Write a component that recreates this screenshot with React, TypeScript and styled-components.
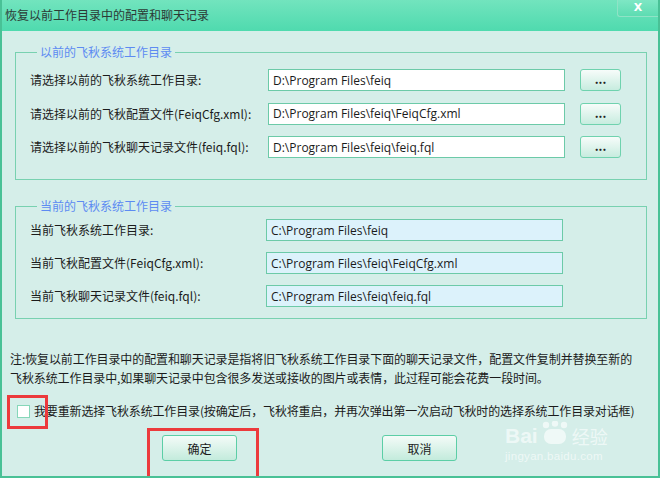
import React, { useState } from "react";
import styled, { createGlobalStyle } from "styled-components";

const GlobalStyle = createGlobalStyle`
	html, body {
		margin: 0;
		padding: 0;
		background: #d5eee9;
	}
	#root {
		width: 660px;
		height: 478px;
	}
	* {
		box-sizing: border-box;
	}
`;

const uiFont = `"Noto Sans CJK SC", "Noto Sans", sans-serif`;
const editFont = `"Open Sans", "Noto Sans CJK SC", sans-serif`;

const previous = [
	{ label: "请选择以前的飞秋系统工作目录:", value: "D:\\Program Files\\feiq" },
	{ label: "请选择以前的飞秋配置文件(FeiqCfg.xml):", value: "D:\\Program Files\\feiq\\FeiqCfg.xml" },
	{ label: "请选择以前的飞秋聊天记录文件(feiq.fql):", value: "D:\\Program Files\\feiq\\feiq.fql" },
];

const current = [
	{ label: "当前飞秋系统工作目录:", value: "C:\\Program Files\\feiq" },
	{ label: "当前飞秋配置文件(FeiqCfg.xml):", value: "C:\\Program Files\\feiq\\FeiqCfg.xml" },
	{ label: "当前飞秋聊天记录文件(feiq.fql):", value: "C:\\Program Files\\feiq\\feiq.fql" },
];

const App: React.FC = () => {
	const [reselect, setReselect] = useState(false);

	return (
		<>
			<GlobalStyle />
			<Window>
				<TitleBar>
					<Title>恢复以前工作目录中的配置和聊天记录</Title>
					<CloseButton aria-label="关闭">X</CloseButton>
				</TitleBar>
				<Body>
					<Group $pad="9px 0 21px">
						<Legend>以前的飞秋系统工作目录</Legend>
						<Rows $cols="223px 297px 41px" $gap="11.5px">
							{previous.map((row) => (
								<React.Fragment key={row.label}>
									<Label>{row.label}</Label>
									<PathInput defaultValue={row.value} />
									<BrowseButton>...</BrowseButton>
								</React.Fragment>
							))}
						</Rows>
					</Group>
					<Group $pad="5px 0 11px" $top="18px">
						<Legend>当前的飞秋系统工作目录</Legend>
						<Rows $cols="221px 297px" $gap="11px">
							{current.map((row) => (
								<React.Fragment key={row.label}>
									<Label>{row.label}</Label>
									<PathInput $readOnly readOnly value={row.value} />
								</React.Fragment>
							))}
						</Rows>
					</Group>
					<Note>
						注:恢复以前工作目录中的配置和聊天记录是指将旧飞秋系统工作目录下面的聊天记录文件，配置文件复制并替换至新的
						<br />
						飞秋系统工作目录中,如果聊天记录中包含很多发送或接收的图片或表情，此过程可能会花费一段时间。
					</Note>
					<CheckRow>
						<CheckBox
							type="checkbox"
							checked={reselect}
							onChange={() => setReselect(!reselect)}
						/>
						<span>
							我要重新选择飞秋系统工作目录(按确定后，飞秋将重启，并再次弹出第一次启动飞秋时的选择系统工作目录对话框)
						</span>
					</CheckRow>
					<Actions>
						<ActionButton>确定</ActionButton>
						<ActionButton>取消</ActionButton>
					</Actions>
				</Body>
				<Watermark>
					<Brand>
						Bai
						<Paw viewBox="0 0 30 24">
							<circle cx="6" cy="4" r="3.2" />
							<circle cx="15" cy="2.6" r="3.2" />
							<circle cx="24" cy="4" r="3.2" />
							<rect x="4" y="8" width="22" height="15" rx="7" />
						</Paw>
						<BrandCn>经验</BrandCn>
					</Brand>
					<BrandUrl>jingyan.baidu.com</BrandUrl>
				</Watermark>
				<Mark $x={7} $y={395} $w={41} $h={34} />
				<Mark $x={147} $y={428} $w={112} $h={56} />
			</Window>
		</>
	);
};

export default App;

const Window = styled.div`
	position: relative;
	width: 660px;
	height: 478px;
	display: flex;
	flex-direction: column;
	background: #d5eee9;
	border: 2px solid #49c196;
	border-top: none;
	font-family: ${uiFont};
	font-size: 12px;
	color: #1b1b1b;
	overflow: hidden;
`;

const TitleBar = styled.div`
	height: 31px;
	flex: none;
	display: flex;
	align-items: center;
	justify-content: space-between;
	padding-left: 3px;
	background: linear-gradient(#72e4be, #4fdaae);
	position: relative;
`;

const Title = styled.div`
	color: #2c3a35;
	font-size: 12px;
	line-height: 16px;
	margin-top: -1px;
`;

const CloseButton = styled.button`
	align-self: flex-start;
	width: 41px;
	height: 17px;
	margin-right: 0;
	padding: 0;
	border: 1px solid #8fe3c6;
	border-top: none;
	border-right: none;
	border-radius: 0 0 0 3px;
	background: linear-gradient(#7ee7c4, #5ddcb2);
	color: #ffffff;
	font-family: "DejaVu Sans", sans-serif;
	font-weight: 700;
	font-size: 11px;
	line-height: 16px;
`;

const Body = styled.div`
	flex: 1;
	display: flex;
	flex-direction: column;
	padding: 13px 11px 0 8px;
`;

const Group = styled.fieldset<{ $pad: string; $top?: string }>`
	margin: ${(p) => p.$top || "0"} 0 0 5px;
	padding: ${(p) => p.$pad};
	padding-left: 14px;
	border: 1px solid #78d1b0;
	min-width: 0;
`;

const Legend = styled.legend`
	margin-left: 7px;
	padding: 0 3px;
	color: #5d8bf2;
	font-size: 12px;
	line-height: 16px;
`;

const Rows = styled.div<{ $cols: string; $gap: string }>`
	display: grid;
	grid-template-columns: ${(p) => p.$cols};
	column-gap: 15px;
	row-gap: ${(p) => p.$gap};
	align-items: center;
`;

const Label = styled.div`
	line-height: 22px;
	white-space: nowrap;
`;

const PathInput = styled.input<{ $readOnly?: boolean }>`
	height: 22px;
	width: 297px;
	padding: 0 4px;
	border: 1px solid #6ccaa8;
	background: ${(p) => (p.$readOnly ? "#dcf2fb" : "#ffffff")};
	font-family: ${editFont};
	font-size: 12px;
	color: #1b1b1b;
	outline: none;
`;

const BrowseButton = styled.button`
	height: 22px;
	padding: 0 0 4px;
	border: 1px solid #6fd2ae;
	border-radius: 3px;
	background: linear-gradient(#f7fcfa, #c7ecdf);
	font-family: ${uiFont};
	font-size: 12px;
	font-weight: 700;
	color: #222;
`;

const Note = styled.p`
	margin: 31px 0 0;
	line-height: 18.5px;
	white-space: nowrap;
	letter-spacing: -0.1px;
`;

const CheckRow = styled.label`
	margin: 16px 0 0 7px;
	display: flex;
	align-items: center;
	gap: 4px;
	line-height: 16px;
	white-space: nowrap;
	letter-spacing: -0.15px;
`;

const CheckBox = styled.input`
	appearance: none;
	margin: 0;
	width: 13px;
	height: 13px;
	border: 1px solid #86d7b9;
	background: #ffffff;
`;

const Actions = styled.div`
	margin: 16px 0 0 152px;
	display: flex;
	gap: 145px;
`;

const ActionButton = styled.button`
	width: 75px;
	height: 26px;
	padding: 0;
	border: 1px solid #5ccea6;
	border-radius: 3px;
	background: linear-gradient(#f4fbf8, #c3ebdc);
	font-family: ${uiFont};
	font-size: 12px;
	color: #1b1b1b;
`;

const Watermark = styled.div`
	position: absolute;
	left: 503px;
	top: 424px;
	display: flex;
	flex-direction: column;
	color: rgba(255, 255, 255, 0.62);
	pointer-events: none;
`;

const Brand = styled.div`
	display: flex;
	align-items: center;
	font-family: "Liberation Sans", sans-serif;
	font-weight: 700;
	font-size: 21px;
	line-height: 24px;
`;

const Paw = styled.svg`
	width: 30px;
	height: 24px;
	margin: -6px 2px 0;
	fill: rgba(255, 255, 255, 0.62);
`;

const BrandCn = styled.span`
	font-family: "Noto Sans CJK SC", sans-serif;
	font-weight: 400;
	font-size: 18px;
`;

const BrandUrl = styled.div`
	font-family: "Liberation Sans", sans-serif;
	font-size: 11.5px;
	line-height: 16px;
	letter-spacing: 0.3px;
`;

const Mark = styled.div<{ $x: number; $y: number; $w: number; $h: number }>`
	position: absolute;
	left: ${(p) => p.$x - 2}px;
	top: ${(p) => p.$y}px;
	width: ${(p) => p.$w}px;
	height: ${(p) => p.$h}px;
	border: 3px solid #ec3a3c;
	pointer-events: none;
`;
